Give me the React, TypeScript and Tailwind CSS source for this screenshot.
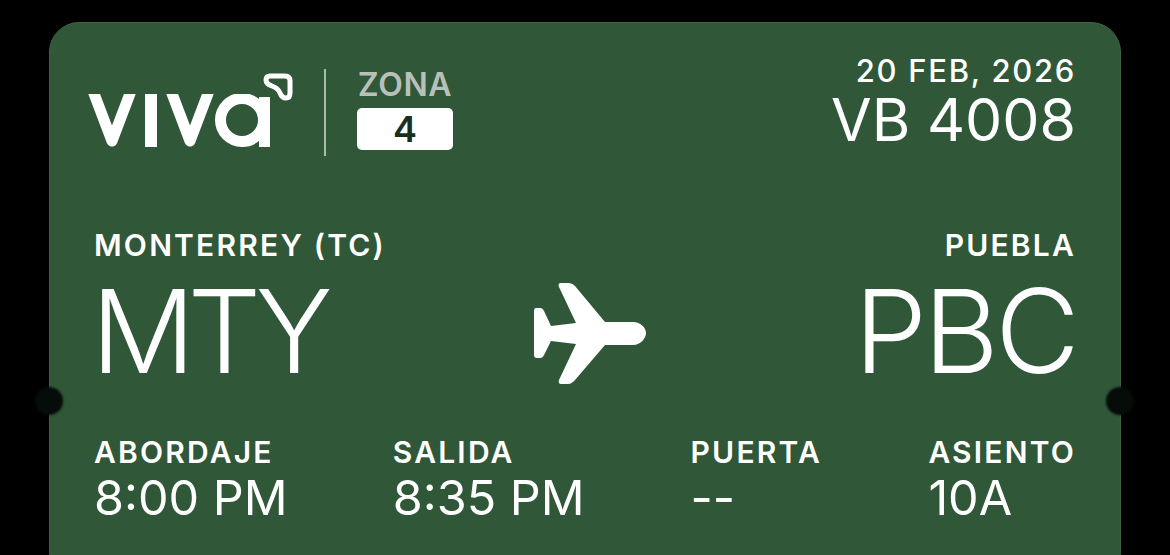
import React from "react";

const VivaLogo = () => (
  <svg width="206" height="80" viewBox="0 0 206 80" fill="none" stroke="#ffffff" className="shrink-0">
    {/* origin at page 88,72 */}
    <defs>
      <clipPath id="viva-top">
        <rect x="-2" y="23" width="208" height="57" />
      </clipPath>
    </defs>
    <g strokeWidth={11} strokeLinejoin="round" clipPath="url(#viva-top)">
      <path d="M2 12 L24 70 L46 12" />
      <path d="M63 20 V76" strokeWidth={12} />
      <path d="M80 12 L102 70 L124 12" />
      <circle cx="154" cy="49" r="21.5" />
      <path d="M176.5 26 V76" />
    </g>
    <path
      d="M182 5 H197 Q202 5 202 10 V22 Q202 27 198 27 Q194 27 192 22 Q190 17 184 15 Q178 13 178 9 Q178 5 182 5 Z"
      strokeWidth={5}
      strokeLinejoin="round"
    />
  </svg>
);

const PlaneIcon = () => (
  <svg width="114" height="102" viewBox="0 0 114 102" className="shrink-0">
    {/* origin at page 534,283 */}
    <path
      fill="#ffffff"
      d="M1 30 C1 26 2 26 4 26 H7 C9 26 10 27 11 29 L18 44 L43 41 L26 5 C25 2 26 1 28 1 H35 C38 1 40 2 42 4 L72 40 H100 C108 40 113 46 113 51 C113 56 108 63 100 63 H72 L42 98 C40 100 38 102 35 102 H28 C26 102 25 100 26 98 L43 62 L18 59 L11 73 C10 75 9 76 7 76 H4 C2 76 1 75 1 73 Z"
    />
  </svg>
);

const Info = ({ label, value, className }: { label: string; value: string; className: string }) => (
  <div className={className}>
    <div className="text-[30px] leading-[32px] font-semibold tracking-[2.2px] text-white">{label}</div>
    <div className="mt-[5px] text-[48.5px] leading-[50px] font-normal text-white">{value}</div>
  </div>
);

const App: React.FC = () => {
  return (
    <div className="w-[1170px] h-[555px] bg-black overflow-hidden pt-[22px] pl-[49px] font-['Inter','Liberation_Sans',sans-serif]">
      <div className="relative w-[1072px] h-[560px] bg-[#2f5738] border border-[#3b6444] rounded-[30px] pt-[48px] pl-[38px] pr-[44px] text-white">
        {/* Notches on the card edges */}
        <div className="absolute left-[-15px] top-[364px] w-[28px] h-[28px] rounded-full bg-[#060c08] blur-[1px]" />
        <div className="absolute right-[-14px] top-[364px] w-[28px] h-[28px] rounded-full bg-[#060c08] blur-[1px]" />

        {/* Header */}
        <div className="flex items-start justify-between h-[90px]">
          <div className="flex items-start">
            <VivaLogo />
            <div className="w-[2px] h-[87px] mt-[-2px] ml-[30px] bg-[#a9bcae]" />
            <div className="ml-[31px] w-[96px] flex flex-col items-center">
              <div className="text-[32px] leading-[30px] font-semibold tracking-[0.6px] text-[#b7c0b9] -mt-[1px]">ZONA</div>
              <div className="mt-[8px] w-[96px] h-[42px] bg-white rounded-[5px] flex items-center justify-center text-[#17301f] text-[36px] leading-none font-semibold">
                4
              </div>
            </div>
          </div>
          <div className="text-right mt-[-16px]">
            <div className="text-[31px] leading-[32px] font-medium tracking-[1.7px]">20 FEB, 2026</div>
            <div className="text-[59px] leading-[58px] font-normal mt-[4px]">VB 4008</div>
          </div>
        </div>

        {/* Route */}
        <div className="flex items-start justify-between mt-[67px] pl-[6px]">
          <div>
            <div className="text-[30px] leading-[34px] font-semibold tracking-[2.2px]">MONTERREY (TC)</div>
            <div className="text-[116px] leading-[110px] font-light tracking-[-8px] -ml-[3px] mt-[14px]">MTY</div>
          </div>
          <div className="mt-[54px] ml-[-60px]">
            <PlaneIcon />
          </div>
          <div className="text-right">
            <div className="text-[30px] leading-[34px] font-semibold tracking-[2.2px]">PUEBLA</div>
            <div className="text-[116px] leading-[110px] font-light tracking-[-3.6px] mt-[14px]">PBC</div>
          </div>
        </div>

        {/* Times and seat */}
        <div className="flex mt-[50px] pl-[6px]">
          <Info label="ABORDAJE" value="8:00 PM" className="w-[299px]" />
          <Info label="SALIDA" value="8:35 PM" className="w-[298px]" />
          <Info label="PUERTA" value="--" className="w-[238px]" />
          <Info label="ASIENTO" value="10A" className="" />
        </div>
      </div>
    </div>
  );
};

export default App;
